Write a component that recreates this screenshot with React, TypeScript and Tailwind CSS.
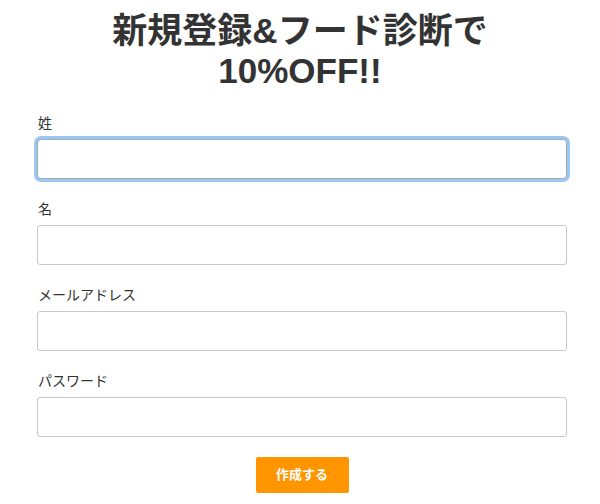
import React from "react";

const font = { fontFamily: '"Liberation Sans", "Noto Sans CJK JP", sans-serif' };

function Field({ label, focused, type = "text" }: { label: string; focused?: boolean; type?: string }) {
  return (
    <div className="flex flex-col">
      <label className="block h-[20px] text-[14px] leading-[20px] text-[#333] mb-[6px] pl-[1px]">{label}</label>
      <input
        type={type}
        className={
          focused
            ? "block h-[40px] w-full rounded-[4px] border border-[#a8a8a8] bg-white outline-none shadow-[0_0_0_3px_#99c8f8]"
            : "block h-[40px] w-full rounded-[3px] border border-[#c8c8c8] bg-white outline-none"
        }
      />
    </div>
  );
}

export default function App() {
  return (
    <div className="w-[600px] h-[504px] bg-white text-[#333] overflow-hidden" style={font}>
      <h1 className="pt-[11px] text-center text-[35px] leading-[40px] font-bold text-[#333]">
        新規登録&amp;フード診断で
        <br />
        10%OFF!!
      </h1>
      <div className="ml-[37px] w-[530px] mt-[22px] flex flex-col gap-[20px]">
        <Field label="姓" focused />
        <Field label="名" />
        <Field label="メールアドレス" type="email" />
        <Field label="パスワード" type="password" />
      </div>
      <div className="flex justify-center mt-[20px]">
        <button className="block w-[93px] h-[36px] ml-[4px] rounded-[2px] bg-[#ff9500] text-white text-[13px] leading-[36px] font-bold">
          作成する
        </button>
      </div>
    </div>
  );
}
